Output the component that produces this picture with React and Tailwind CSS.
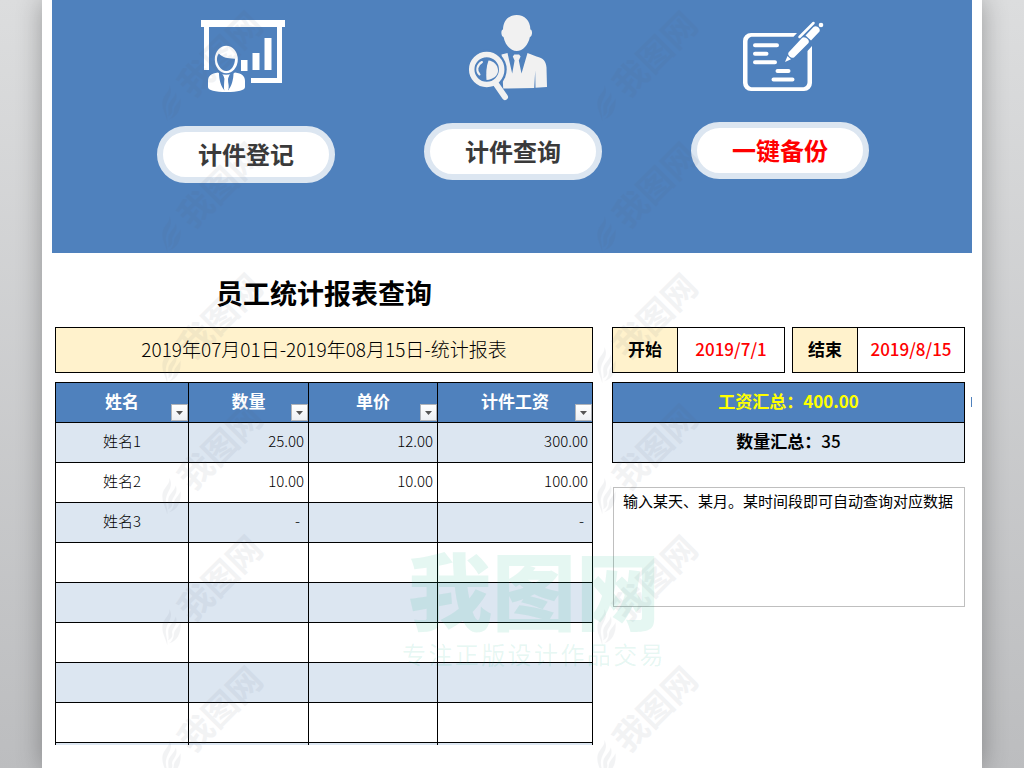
import React from 'react';

const columns = [
  { title: '姓名', width: 'w-[133px]' },
  { title: '数量', width: 'w-[120px]' },
  { title: '单价', width: 'w-[129px]' },
  { title: '计件工资', width: 'w-[155px]' },
];

const rows = [
  ['姓名1', '25.00', '12.00', '300.00'],
  ['姓名2', '10.00', '10.00', '100.00'],
  ['姓名3', '-', '', '-'],
  ['', '', '', ''],
  ['', '', '', ''],
  ['', '', '', ''],
  ['', '', '', ''],
  ['', '', '', ''],
  ['', '', '', ''],
];

const RegisterIcon = () => (
  <svg className="w-full h-[126px]" viewBox="157 0 178 126" fill="#fff" aria-hidden="true">
    <path d="M201 20h84v7h-84z M204 27h5v43h-5z M277 27h5v56h-31v-5h26z" />
    <path d="M241 60h6.5v11H241z M252.5 53h7v17h-7z M264.5 38h7v32h-7z" />
    <ellipse cx="226.3" cy="59.5" rx="11.5" ry="13.7" />
    <path d="M218.8 53.500c3.500 3.500 8.500 5.300 16.200 5.200 0 6-3.500 12.300-8.700 12.300-5.500 0-9.800-7-9.300-12.500 0.200-2 0.800-3.500 1.800-5z" fill="#4f81bd" />
    <path d="M208 81c0-5 3-7.500 10-8.500 3 3 13 3 17 0 7 1 10 3.500 10 8.500v6c0 3.500-7 5-18.500 5S208 90.500 208 87z" />
    <path d="M219 73h2.500l3.500 5-1 8 0.500 4.500c-3.500-4-5.500-11-5.500-17.500z M233.500 73h-2.500l-3.500 5 1 8-0.500 4.500c3.500-4 5.500-11 5.500-17.500z" fill="#4f81bd" />
    <path d="M223.500 75.500h5.500l-1 3.500 0.500 10-2.300 2-2.200-2 0.500-10z" />
  </svg>
);

const SearchIcon = () => (
  <svg className="w-full h-[123px]" viewBox="424 0 178 123" fill="#f1f1f1" aria-hidden="true">
    <path d="M516.700 15c8 0 13.500 5.500 13.700 14.500 2.300 0.300 2.200 6.500-0.500 7.500-1.700 8-7 14-13.200 14s-11.500-6-13.200-14c-2.700-1-2.800-7.200-0.500-7.500C503.200 20.500 508.700 15 516.700 15z" />
    <path d="M501.500 54.500l6-1.500 4.700 20.500 2.400-13-1.800-4 1.500-2h4.800l1.500 2-1.800 4 2.700 13L527.500 53l9 3.500c7 1.500 9.500 5 10 11l0.500 19.500-11.500 0.800-0.300-17-1 17.200-31 0.500z" />
    <circle cx="486.700" cy="69.500" r="20" fill="#4f81bd" />
    <circle cx="486.700" cy="69.500" r="15" fill="none" stroke="#f1f1f1" strokeWidth="5.500" />
    <path d="M488.500 60.500c5 0.500 9 4 9.500 9.500s-5 9.500-11.500 10c-0.500-6-0.500-13 2-19.500z" />
    <path d="M482 62c-5.500 3-6 9-2.500 12.500" fill="none" stroke="#f1f1f1" strokeWidth="2" strokeLinecap="round" />
    <path d="M496 84l9 13" stroke="#f1f1f1" strokeWidth="6" strokeLinecap="round" />
  </svg>
);

const BackupIcon = () => (
  <svg className="w-full h-[122px]" viewBox="691 0 178 122" fill="#fff" aria-hidden="true">
    <path fillRule="evenodd" d="M797 33h-46a8 8 0 0 0-8 8v42a8 8 0 0 0 8 8h53a8 8 0 0 0 8-8V46l-4.500 5v31c0 3.500-2.500 5.300-5 5.300h-50c-2.500 0-5-1.800-5-5.300V42c0-3.500 2.500-5.300 5-5.300h41z" />
    <path d="M755 45.300h22 M755 53.800h11.500 M755 62.200h20 M777.500 71h11 M773.500 79.500h19" fill="none" stroke="#fff" strokeWidth="4" strokeLinecap="round" />
    <path d="M785 62l2.500-6 3.500 3.300z" />
    <path d="M788.500 52.500l13.500-14.500c2.500-2.500 8.500 2 6.500 5l-14.500 14.500c-2.500 1.500-7-2-5.500-5z M805.500 35.500l8-8.500c3-2.500 7.500 1.500 6 4.500L811 40.500z" />
    <path d="M799.500 37L813.500 23" fill="none" stroke="#fff" strokeWidth="2.500" strokeLinecap="round" />
    <circle cx="821" cy="25" r="2.300" />
  </svg>
);

const actions = [
  { label: '计件登记', icon: RegisterIcon, color: 'text-[#3a3a3a]' },
  { label: '计件查询', icon: SearchIcon, color: 'text-[#3a3a3a]' },
  { label: '一键备份', icon: BackupIcon, color: 'text-[#ff0000]' },
];

// faint diagonal stamp: a feather mark followed by the site name
const Stamp = () => (
  <div className="relative w-[104px] h-[131px] shrink-0 text-[#5a6078]">
    <svg className="absolute left-0 top-[84px] w-[24px] h-[38px]" viewBox="0 0 24 40" fill="currentColor" aria-hidden="true">
      <path d="M9 1c2 6-6 10-7 17-1 8 3 13 5 21 1-6-3-12-1-18C8 14 14 9 9 1z" />
      <path d="M16 9c-1 6-8 9-8 16 0 4 1 6 0 9 4-2 5-5 4-8 0-5 7-8 4-17z" />
      <path d="M21 15c-2 5-6 7-7 12 0 3-1 7-5 10 8-2 13-10 12-22z" />
    </svg>
    <span className="absolute left-[8px] top-[33px] w-[102px] h-[40px] flex items-center justify-center text-[34px] leading-[40px] font-bold whitespace-nowrap -rotate-45">我图网</span>
  </div>
);

const StampColumn = () => (
  <div className="w-[104px] flex flex-col">
    {[0, 1, 2, 3, 4, 5].map((n) => <Stamp key={n} />)}
  </div>
);

const DateField = ({ id, label, value }) => (
  <div className="flex flex-1 min-w-0 h-[46px] border border-black">
    <label htmlFor={id} className="w-[65px] shrink-0 flex items-center justify-center pb-0.5 border-r border-black bg-[#fff2cc] text-[17px] font-bold">
      {label}
    </label>
    <input id={id} type="text" defaultValue={value} className="w-full min-w-0 pb-0.5 text-center text-[17px] font-medium text-[#ff0000] outline-none" />
  </div>
);

const App = () => {
  return (
    <div className="min-h-screen flex px-[42px] bg-linear-to-b from-[#dcddde] to-[#bcbdbf] text-black font-['Noto_Sans_CJK_SC',sans-serif]">
      <main className="relative flex-1 min-w-0 bg-white px-[10px] pb-6 overflow-x-clip shadow-[0_0_24px_rgba(0,0,0,0.3)]">
        {/* Banner */}
        <header className="h-[253px] bg-[#4f81bd] flex justify-center gap-[89px] pl-0.5">
          {actions.map(({ label, icon: Icon, color }) => (
            <div key={label} className="w-[178px] flex flex-col items-center">
              <Icon />
              <button className={`${color} w-full h-[57px] pb-0.5 rounded-full border-[6px] border-[#dce6f1] bg-white text-2xl font-bold`}>
                {label}
              </button>
            </div>
          ))}
        </header>

        <div className="pl-[3px] pr-[7px] grid grid-cols-[538fr_353fr] gap-x-[19px]">
          {/* Report */}
          <section className="min-w-0">
            <h1 className="h-[74px] pt-1.5 flex items-center justify-center text-[27px] font-bold">员工统计报表查询</h1>
            <div className="h-[46px] pb-0.5 flex items-center justify-center border border-black bg-[#fff2cc] text-[19px] font-light">
              2019年07月01日-2019年08月15日-统计报表
            </div>
            <div className="mt-[9px] h-[363px] overflow-hidden">
              <table className="w-full table-fixed border-separate border-spacing-0 border-l border-t border-black">
                <thead>
                  <tr className="bg-[#4f81bd] text-white">
                    {columns.map((col) => (
                      <th key={col.title} className={`${col.width} relative h-10 px-0 pt-0 pb-1 border-r border-b border-black text-[17px] leading-6 font-bold`}>
                        {col.title}
                        <button aria-label={`筛选${col.title}`} className="absolute right-0 bottom-px size-[17px] flex items-center justify-center border border-[#b0b4ba] bg-linear-to-b from-white to-[#edf0f4]">
                          <svg className="w-[7px] h-[4px]" viewBox="0 0 7 4" fill="#555" aria-hidden="true">
                            <path d="M0 0h7L3.500 4z" />
                          </svg>
                        </button>
                      </th>
                    ))}
                  </tr>
                </thead>
                <tbody>
                  {rows.map((row, i) => (
                    <tr key={i} className="odd:bg-[#dce6f1]">
                      {row.map((cell, j) => (
                        <td key={j} className={`h-10 pt-0 pb-1 border-r border-b border-black text-[15px] leading-6 font-light ${j === 0 ? 'px-0 text-center' : cell === '-' ? 'pr-2 text-right' : 'pr-1 text-right'}`}>
                          {cell}
                        </td>
                      ))}
                    </tr>
                  ))}
                </tbody>
              </table>
            </div>
          </section>

          {/* Query and totals */}
          <aside className="min-w-0 pt-[74px]">
            <div className="flex gap-[7px]">
              <DateField id="start" label="开始" value="2019/7/1" />
              <DateField id="end" label="结束" value="2019/8/15" />
            </div>
            <div className="mt-[9px] border border-black text-center text-[17px] font-bold">
              <p className="h-10 leading-9 border-b border-black bg-[#4f81bd] text-[#ffff00]">工资汇总：400.00</p>
              <p className="h-[39px] leading-9 bg-[#dce6f1]">数量汇总：<span className="font-medium">35</span></p>
            </div>
            <textarea
              aria-label="说明"
              defaultValue="输入某天、某月。某时间段即可自动查询对应数据"
              className="block mt-6 ml-px w-[calc(100%-1px)] h-[120px] resize-none border border-[#bfbfbf] px-[9px] py-px text-[15px] leading-6 outline-none"
            />
          </aside>
        </div>

        <span className="absolute right-[10px] top-[397px] w-px h-[10px] bg-[#4f81bd]" />

        {/* Watermarks */}
        <div className="pointer-events-none absolute inset-0 overflow-hidden select-none">
          <div className="absolute left-[118px] top-0 flex gap-[331px] opacity-[0.07]">
            <StampColumn />
            <StampColumn />
          </div>
          <div className="absolute left-[355px] top-[546px] w-[274px] flex flex-col items-center whitespace-nowrap text-[#00b482]/10">
            <span className="text-[84px] leading-[84px] font-black">我图网</span>
            <span className="mt-2 text-2xl leading-8 tracking-widest">专注正版设计作品交易</span>
          </div>
        </div>
      </main>
    </div>
  );
};

export default App;
